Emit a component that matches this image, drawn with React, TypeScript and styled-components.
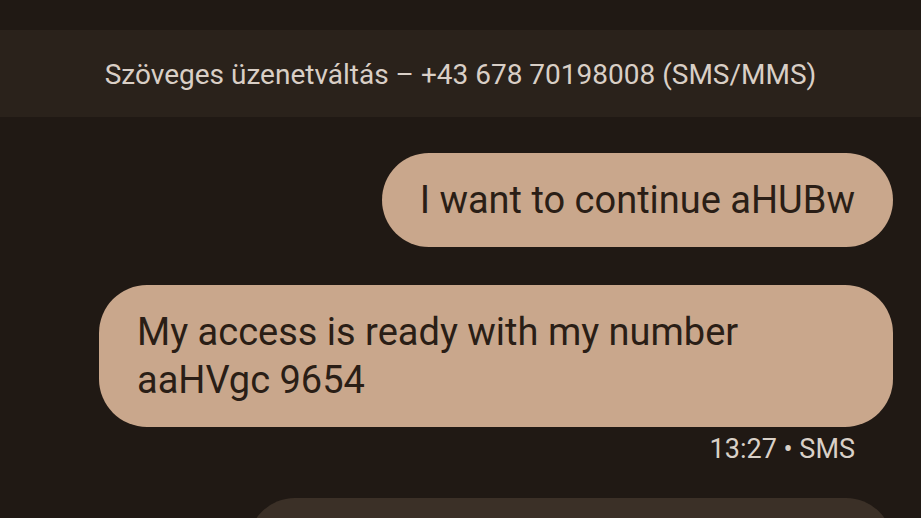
import { createGlobalStyle } from "styled-components";
import styled from "styled-components";

const GlobalStyle = createGlobalStyle`
    html, body {
        margin: 0;
        padding: 0;
        background: #201914;
        overflow: hidden;
    }
    body {
        font-family: Roboto, "Noto Sans", sans-serif;
    }
`;

const Screen = styled.div`
    width: 921px;
    height: 518px;
    background: #201914;
    padding-top: 30px;
    box-sizing: border-box;
    overflow: hidden;
`;

const Banner = styled.div`
    height: 87px;
    background: #2a221b;
    color: #d9cfc6;
    font-size: 28px;
    display: flex;
    align-items: center;
    justify-content: center;
    padding-top: 1px;
    box-sizing: border-box;
`;

const Thread = styled.div`
    display: flex;
    flex-direction: column;
    align-items: flex-end;
    padding: 36px 28px 0 28px;
`;

interface IBubble {
    dim?: boolean;
}

const Bubble = styled.div<IBubble>`
    max-width: 794px;
    box-sizing: border-box;
    padding: 23px 38px;
    border-radius: 48px;
    background: ${props => (props.dim ? "#3b3027" : "#c9a78c")};
    color: #2a1e16;
    font-size: 38px;
    line-height: 48px;
    width: ${props => (props.dim ? "645px" : "auto")};
`;

const Meta = styled.div`
    color: #d9d0c7;
    font-size: 27px;
    line-height: 32px;
    padding: 6px 38px 0 0;
`;

const Gap = styled.div<{ size: number }>`
    height: ${props => props.size}px;
`;

const messages = [
    { text: "I want to continue aHUBw" },
    { text: "My access is ready with my number aaHVgc 9654", meta: "13:27 • SMS" },
];

export default function App() {
    return (
        <Screen>
            <GlobalStyle />
            <Banner>Szöveges üzenetváltás – +43 678 70198008 (SMS/MMS)</Banner>
            <Thread>
                <Bubble>{messages[0].text}</Bubble>
                <Gap size={38} />
                <Bubble>{messages[1].text}</Bubble>
                <Meta>{messages[1].meta}</Meta>
                <Gap size={33} />
                <Bubble dim>&nbsp;</Bubble>
            </Thread>
        </Screen>
    );
}
